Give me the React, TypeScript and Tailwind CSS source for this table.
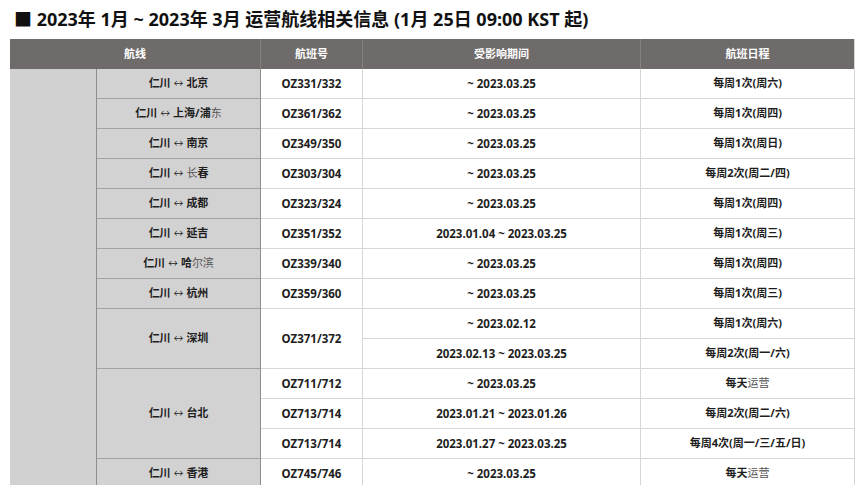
import type { ReactNode } from "react";

const font = { fontFamily: '"Noto Sans", "Noto Sans CJK SC", sans-serif' };

type Row = {
  route?: ReactNode;
  routeSpan?: number;
  flight?: string;
  flightSpan?: number;
  period: string;
  schedule: ReactNode;
};

const light = (t: string) => <span className="font-normal text-[#555]">{t}</span>;

const route = (to: ReactNode) => (
  <>
    仁川 <span className="text-[10px] font-normal">↔</span> {to}
  </>
);

const daily = <>每天{light("运营")}</>;

const rows: Row[] = [
  { route: route("北京"), flight: "OZ331/332", period: "~ 2023.03.25", schedule: "每周1次(周六)" },
  { route: route(<>上海/浦{light("东")}</>), flight: "OZ361/362", period: "~ 2023.03.25", schedule: "每周1次(周四)" },
  { route: route("南京"), flight: "OZ349/350", period: "~ 2023.03.25", schedule: "每周1次(周日)" },
  { route: route(<>{light("长")}春</>), flight: "OZ303/304", period: "~ 2023.03.25", schedule: "每周2次(周二/四)" },
  { route: route("成都"), flight: "OZ323/324", period: "~ 2023.03.25", schedule: "每周1次(周四)" },
  { route: route("延吉"), flight: "OZ351/352", period: "2023.01.04 ~ 2023.03.25", schedule: "每周1次(周三)" },
  { route: route(<>哈{light("尔滨")}</>), flight: "OZ339/340", period: "~ 2023.03.25", schedule: "每周1次(周四)" },
  { route: route("杭州"), flight: "OZ359/360", period: "~ 2023.03.25", schedule: "每周1次(周三)" },
  { route: route("深圳"), routeSpan: 2, flight: "OZ371/372", flightSpan: 2, period: "~ 2023.02.12", schedule: "每周1次(周六)" },
  { period: "2023.02.13 ~ 2023.03.25", schedule: "每周2次(周一/六)" },
  { route: route("台北"), routeSpan: 3, flight: "OZ711/712", period: "~ 2023.03.25", schedule: daily },
  { flight: "OZ713/714", period: "2023.01.21 ~ 2023.01.26", schedule: "每周2次(周二/六)" },
  { flight: "OZ713/714", period: "2023.01.27 ~ 2023.03.25", schedule: "每周4次(周一/三/五/日)" },
  { route: route("香港"), flight: "OZ745/746", period: "~ 2023.03.25", schedule: daily },
];

export default function App() {
  return (
    <div className="min-h-screen bg-white px-[10px] text-[#1e1e1e]" style={font}>
      <h1 className="h-[39px] pl-[4px] text-[18px] font-bold leading-[39px] text-[#111]">
        ■ 2023年 1月 ~ 2023年 3月 运营航线相关信息 (1月 25日 09:00 KST 起)
      </h1>

      <table className="w-[845px] table-fixed border-separate border-spacing-0 text-center text-[11.5px] font-bold">
        <colgroup>
          <col className="w-[87px]" />
          <col className="w-[164px]" />
          <col className="w-[102px]" />
          <col className="w-[278px]" />
          <col className="w-[214px]" />
        </colgroup>
        <thead>
          <tr className="bg-[#6e6b6a] text-[11px] text-white">
            <th colSpan={2} className="h-[30px] border-r border-[#84817f] p-0 font-bold">航线</th>
            <th className="h-[30px] border-r border-[#84817f] p-0 font-bold">航班号</th>
            <th className="h-[30px] border-r border-[#84817f] p-0 font-bold">受影响期间</th>
            <th className="h-[30px] border-r border-[#d9d9d9] p-0 font-bold">航班日程</th>
          </tr>
        </thead>
        <tbody>
          {rows.map((r, i) => (
            <tr key={i}>
              {i === 0 && <td rowSpan={rows.length} className="border-r border-[#8e8d8d] bg-[#d2d1d1] p-0" />}
              {r.route !== undefined && (
                <td
                  rowSpan={r.routeSpan}
                  className="h-[30px] border-b border-r border-b-[#a3a2a2] border-r-[#8e8d8d] bg-[#d3d2d2] p-0 text-[11px]"
                >
                  {r.route}
                </td>
              )}
              {r.flight !== undefined && (
                <td rowSpan={r.flightSpan} className="h-[30px] border-b border-r border-[#d6d6d6] bg-white p-0">
                  {r.flight}
                </td>
              )}
              <td className="h-[30px] border-b border-r border-[#d6d6d6] bg-white p-0">{r.period}</td>
              <td className="h-[30px] border-b border-r border-[#d6d6d6] bg-white p-0 text-[11px]">{r.schedule}</td>
            </tr>
          ))}
        </tbody>
      </table>
    </div>
  );
}
